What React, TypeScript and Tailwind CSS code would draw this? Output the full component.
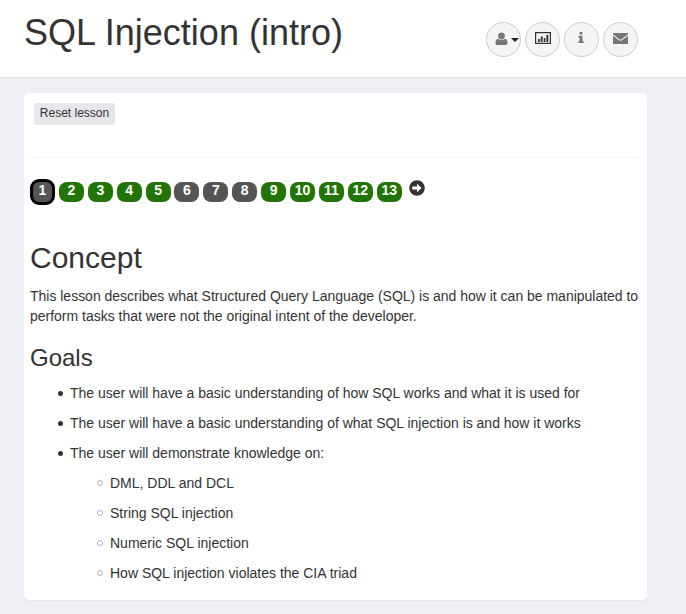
import React from "react";

const pages = [1, 2, 3, 4, 5, 6, 7, 8, 9, 10, 11, 12, 13];
const unsolved = [6, 7, 8];

function pageClass(n: number) {
  if (n === 1) return "h-[26px] rounded-[9px] border-[3px] border-black bg-[#555] leading-[17px]";
  if (unsolved.includes(n)) return "h-5 rounded-[8px] bg-[#555] leading-[17px]";
  return "h-5 rounded-[8px] bg-[#217506] leading-[17px]";
}

function RoundButton({ children }: { children: React.ReactNode }) {
  return (
    <button className="flex h-[35px] w-[35px] items-center justify-center rounded-full border border-[#ccc] bg-[#f5f5f5] text-[#777]">
      {children}
    </button>
  );
}

function Header() {
  return (
    <header className="flex h-[78px] justify-between border-b border-[#e2e2e6] bg-white pl-6 pr-12">
      <h1 className="mt-[13px] text-[36px] leading-10 tracking-[0.01px] whitespace-nowrap">SQL Injection (intro)</h1>
      <div className="mt-[22px] flex gap-1">
        <RoundButton>
          <svg width="26" height="14" viewBox="0 0 26 14" className="-mt-[2px] ml-[9px] shrink-0">
            <path fill="#777" d="M6.500 .6a3.400 3.400 0 0 1 3.400 3.400c0 1.900-1.500 3.400-3.400 3.400S3.100 5.900 3.100 4A3.400 3.400 0 0 1 6.500 .6zM3.200 6.800c1.900 1.900 4.700 1.900 6.600 0C12 6.900 12.500 9 12.500 11c0 1.300-.7 2.100-1.800 2.100H2.300C1.200 13.100.5 12.300.5 11c0-2 .5-4.100 2.700-4.200z" />
            <path fill="#222" d="M16 6h8l-4 4z" />
          </svg>
        </RoundButton>
        <RoundButton>
          <svg width="16" height="12" viewBox="0 0 16 12" className="-mt-[3px]">
            <path fill="none" stroke="#333" strokeWidth="1.200" d="M.6.6h14.800v10.800H.6z" />
            <path fill="#333" d="M3 7h1.800v3H3zM5.700 4.500h1.900V10H5.700zM8.700 6h1.700v4H8.700zM11.400 3h1.900v7h-1.900z" />
          </svg>
        </RoundButton>
        <RoundButton>
          <svg width="6" height="11" viewBox="0 0 6 11" className="-mt-[4px] -ml-px">
            <path fill="currentColor" d="M1.500 0h3v2.400h-3zM.5 3.700h4v5.500H5.700V11H.3V9.200h1.200V5.500h-1z" />
          </svg>
        </RoundButton>
        <RoundButton>
          <svg width="15" height="11" viewBox="0 0 15 11" className="-mt-[2px]">
            <path fill="currentColor" d="M0 0h15v1.300L9 5.900q-1.500 1-3 0L0 1.300zM0 2.700l5.700 4.400q1.800 1.300 3.600 0L15 2.700V11H0z" />
          </svg>
        </RoundButton>
      </div>
    </header>
  );
}

function Item({ children }: { children: React.ReactNode }) {
  return (
    <li className="flex h-[30px] items-start leading-5 tracking-[-0.01px]">
      <span className="mt-[8px] mr-[7px] ml-7 h-[5px] w-[5px] rounded-full bg-[#333]" />
      {children}
    </li>
  );
}

function SubItem({ children }: { children: React.ReactNode }) {
  return (
    <li className="flex h-[30px] items-start pl-10 leading-5">
      <span className="mt-[7px] mr-[7px] ml-[27px] h-[6px] w-[6px] rounded-full border border-[#b5aebb]" />
      {children}
    </li>
  );
}

export default function App() {
  return (
    <div className="h-[614px] w-[686px] overflow-hidden bg-[#eff0f6] font-['Liberation_Sans',Arial,sans-serif] text-[14px] text-[#333]">
      <Header />
      <main className="mt-[15px] ml-6 h-[507px] w-[623px] rounded-[5px] bg-white px-[6px] pt-[10px] shadow-[0_1px_1px_rgba(0,0,0,0.05)]">
        <section className="h-[54px] rounded-[4px] px-1 shadow-[0_1px_1px_rgba(0,0,0,0.035)]">
          <button className="block h-[22px] w-[81px] rounded-[3px] bg-[#e7e7eb] pb-[2px] text-[12px] leading-[18px] whitespace-nowrap">Reset lesson</button>
        </section>
        <nav className="mt-[22px] flex h-[26px] items-center gap-[3.9px]">
          {pages.map((n) => (
            <div key={n} className={"w-[25px] shrink-0 text-center font-bold text-white " + pageClass(n)}>
              {n}
            </div>
          ))}
          <svg width="16" height="16" viewBox="0 0 16 16" className="-mt-[8px] ml-[3px]">
            <circle cx="8" cy="8" r="7.800" fill="#333" />
            <path fill="#fff" d="M3.300 6.500H8V3.800L12.500 8 8 12.200V9.500H3.300z" />
          </svg>
        </nav>
        <h2 className="mt-9 text-[30px] leading-[33px]">Concept</h2>
        <p className="mt-[12px] leading-5 tracking-[-0.013px] whitespace-nowrap">
          This lesson describes what Structured Query Language (SQL) is and how it can be manipulated to
          <br />
          perform tasks that were not the original intent of the developer.
        </p>
        <h3 className="mt-[18px] text-[24px] leading-[28px]">Goals</h3>
        <ul className="mt-[11px]">
          <Item>The user will have a basic understanding of how SQL works and what it is used for</Item>
          <Item>The user will have a basic understanding of what SQL injection is and how it works</Item>
          <Item>The user will demonstrate knowledge on:</Item>
          <SubItem>DML, DDL and DCL</SubItem>
          <SubItem>String SQL injection</SubItem>
          <SubItem>Numeric SQL injection</SubItem>
          <SubItem>How SQL injection violates the CIA triad</SubItem>
        </ul>
      </main>
    </div>
  );
}
